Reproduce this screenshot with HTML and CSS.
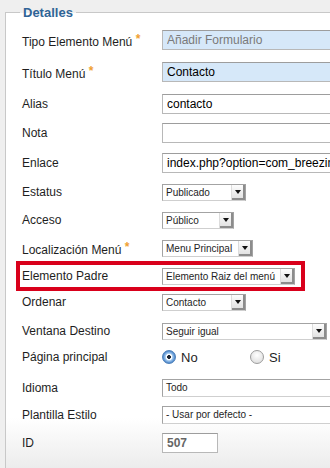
FILE: index.html
```html
<!DOCTYPE html>
<html lang="es">
  <head>
    <meta charset="utf-8" />
    <title>Detalles</title>
    <link rel="stylesheet" href="styles.css">
  </head>
  <body>
    <fieldset class="details">
      <legend>Detalles</legend>
      <div class="row row-first">
        <label class="label">Tipo Elemento Menú <span class="req">*</span></label>
        <input class="input input-wide input-req input-ro" type="text" value="Añadir Formulario" readonly>
      </div>
      <div class="row gap-12">
        <label class="label">Título Menú <span class="req">*</span></label>
        <input class="input input-wide input-req" type="text" value="Contacto">
      </div>
      <div class="row gap-12">
        <label class="label">Alias</label>
        <input class="input input-wide" type="text" value="contacto">
      </div>
      <div class="row gap-9">
        <label class="label">Nota</label>
        <input class="input input-wide" type="text" value="">
      </div>
      <div class="row gap-10">
        <label class="label">Enlace</label>
        <input class="input input-wide" type="text" value="index.php?option=com_breezingforms">
      </div>
      <div class="row gap-9">
        <label class="label">Estatus</label>
        <div class="select w-84"><span class="select-text">Publicado</span><span class="select-arrow"></span></div>
      </div>
      <div class="row">
        <label class="label">Acceso</label>
        <div class="select w-72"><span class="select-text">Público</span><span class="select-arrow"></span></div>
      </div>
      <div class="row">
        <label class="label">Localización Menú <span class="req">*</span></label>
        <div class="select w-91"><span class="select-text">Menu Principal</span><span class="select-arrow"></span></div>
      </div>
      <div class="row row-hl">
        <label class="label">Elemento Padre</label>
        <div class="select w-133"><span class="select-text">Elemento Raiz del menú</span><span class="select-arrow"></span></div>
      </div>
      <div class="row gap-6">
        <label class="label">Ordenar</label>
        <div class="select w-84"><span class="select-text">Contacto</span><span class="select-arrow"></span></div>
      </div>
      <div class="row gap-9">
        <label class="label">Ventana Destino</label>
        <div class="select w-165"><span class="select-text">Seguir igual</span><span class="select-arrow"></span></div>
      </div>
      <div class="row gap-6">
        <label class="label">Página principal</label>
        <div class="radios">
          <span class="option"><span class="radio radio-on"></span>No</span>
          <span class="option"><span class="radio"></span>Si</span>
        </div>
      </div>
      <div class="row gap-11">
        <label class="label">Idioma</label>
        <div class="select select-long"><span class="select-text">Todo</span></div>
      </div>
      <div class="row gap-7">
        <label class="label">Plantilla Estilo</label>
        <div class="select select-long"><span class="select-text">- Usar por defecto -</span></div>
      </div>
      <div class="row">
        <label class="label">ID</label>
        <input class="input input-id" type="text" value="507" readonly>
      </div>
    </fieldset>
  </body>
</html>
```

FILE: styles.css
```css
body{
  margin:0;
  height:468px;
  overflow:hidden;
  background:#efefef;
  color:#1e1e1e;
  font:12px 'Liberation Sans',Arial,sans-serif;
}

.details{
  margin:5px 0 0 5px;
  padding:0 0 0 16px;
  min-height:480px;
  overflow:hidden;
  border:1px solid #c8c8c8;
  border-right:0;
  background:linear-gradient(#fff 405px,#ececec 455px);
}
.details legend{
  margin-left:-2px;
  padding:0 3px;
  color:#2f6497;
  font:bold 13px/15px 'Liberation Sans',Arial,sans-serif;
}

.row{
  display:flex;
  align-items:center;
  height:20px;
  margin-top:8px;
}
.row-first{margin-top:10px}
.gap-6{margin-top:6px}
.gap-7{margin-top:7px}
.gap-9{margin-top:9px}
.gap-10{margin-top:10px}
.gap-11{margin-top:11px}
.gap-12{margin-top:12px}

/* red marker around the parent item row */
.row-hl{
  width:279px;
  margin:3px 0 -5px -6px;
  padding:1px 0 1px 2px;
  border:4px solid #d9001b;
}

.label{
  flex:none;
  width:140px;
  white-space:nowrap;
}
.req{
  color:#f0a030;
  font-size:12px;
  font-weight:bold;
  vertical-align:3px;
}

.input{
  flex:none;
  box-sizing:border-box;
  height:20px;
  margin:0;
  padding:0 4px;
  border:1px solid #b8b8b8;
  border-top-color:#9d9d9d;
  border-radius:0;
  background:#fff;
  color:#000;
  font:12px 'Liberation Sans',Arial,sans-serif;
  outline:none;
}
/* wide fields run on past the right edge of the panel */
.input-wide{
  flex:1;
  min-width:0;
  border-right:0;
}
.input-req{background:#d6e8f9}
.input-ro{color:#7a7a7a}
.input-id{
  width:56px;
  color:#666;
  font-weight:bold;
}

.select{
  flex:none;
  display:flex;
  box-sizing:border-box;
  height:17px;
  border:1px solid #a3a3a3;
  border-bottom-color:#cfcfcf;
  background:#fff;
  font-size:10px;
}
.select-text{
  flex:1;
  padding-left:3px;
  line-height:15px;
  white-space:nowrap;
  overflow:hidden;
}
.select-arrow{
  position:relative;
  flex:none;
  width:13px;
  border-left:1px solid #dcdcdc;
  background:linear-gradient(#fdfdfd,#dedede);
  box-shadow:inset -2px -2px 0 #8c8c8c;
}
.select-arrow:after{
  content:'';
  position:absolute;
  left:3px;
  top:5px;
  border:3px solid transparent;
  border-top:4px solid #111;
  border-bottom:0;
}
.w-72{width:72px}
.w-84{width:84px}
.w-91{width:91px}
.w-133{width:133px}
.w-165{width:165px}
.select-long{
  flex:1;
  min-width:0;
  height:18px;
  border-right:0;
}
.select-long .select-text{line-height:16px}

.radios{
  display:flex;
  font-size:13px;
}
.option{
  display:flex;
  align-items:center;
  width:88px;
}
.radio{
  box-sizing:border-box;
  width:14px;
  height:14px;
  margin-right:5px;
  border:1px solid #9c9c9c;
  border-radius:50%;
  background:radial-gradient(circle at 50% 35%,#fff,#d8d8d8);
}
.radio-on{
  border-color:#4d7fb8;
  background:radial-gradient(circle,#1d2633 0 1.6px,#fff 2.2px 3px,#a9cdf0 3.6px,#4d88cc 6px);
}
```
